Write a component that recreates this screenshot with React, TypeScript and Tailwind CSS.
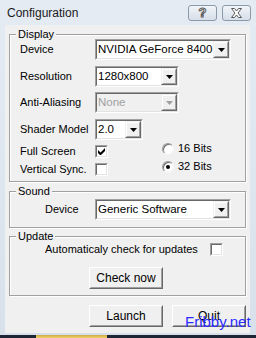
const font = "font-['Liberation_Sans',Arial,sans-serif]"

const Select = ({ value, w, disabled }: { value: string; w: string; disabled?: boolean }) => (
  <div className={`${w} h-[21px] flex border border-t-[#a0a0a0] border-l-[#a0a0a0] border-r-white border-b-white`}>
    <div
      className={`flex-1 min-w-0 flex border border-t-[#696969] border-l-[#696969] border-r-[#e3e3e3] border-b-[#e3e3e3] ${
        disabled ? 'bg-[#f0f0f0] text-[#a0a0a0]' : 'bg-white text-black'
      }`}
    >
      <span className="flex-1 min-w-0 overflow-hidden whitespace-nowrap pl-[1px] leading-[17px] text-[11.5px]">{value}</span>
      <div className="w-[16px] h-[17px] flex border border-t-[#f0f0f0] border-l-[#f0f0f0] border-r-[#696969] border-b-[#696969]">
        <div className="flex-1 flex items-center justify-center bg-[#f0f0f0] border border-t-white border-l-white border-r-[#a0a0a0] border-b-[#a0a0a0]">
          <svg width="7" height="4" viewBox="0 0 7 4">
            <path d="M0 0h7L3.5 4z" fill={disabled ? '#a0a0a0' : '#000'} />
          </svg>
        </div>
      </div>
    </div>
  </div>
)

const Checkbox = ({ checked }: { checked?: boolean }) => (
  <div className="w-[13px] h-[13px] flex border border-t-[#a0a0a0] border-l-[#a0a0a0] border-r-white border-b-white">
    <div className="flex-1 flex items-center justify-center bg-white border border-t-[#696969] border-l-[#696969] border-r-[#e3e3e3] border-b-[#e3e3e3]">
      {checked && (
        <svg width="7" height="7" viewBox="0 0 7 7">
          <path d="M0 2v3l2 2h1l4-4V0L2.5 4.5z" fill="#000" />
        </svg>
      )}
    </div>
  </div>
)

const Radio = ({ checked }: { checked?: boolean }) => (
  <div className="w-[12px] h-[12px] rounded-full flex items-center justify-center bg-white border border-t-[#9a9a9a] border-l-[#9a9a9a] border-r-[#f4f4f4] border-b-[#f4f4f4] shadow-[inset_1px_1px_0_#707070]">
    {checked && <div className="w-[4px] h-[4px] rounded-full bg-black" />}
  </div>
)

const Button = ({ label }: { label: string }) => (
  <div className="w-[74px] h-[22px] flex border border-t-white border-l-white border-r-[#696969] border-b-[#696969]">
    <div className="flex-1 flex items-center justify-center bg-[#f0f0f0] border border-t-[#f0f0f0] border-l-[#f0f0f0] border-r-[#a0a0a0] border-b-[#a0a0a0] text-[12px]">
      {label}
    </div>
  </div>
)

const Group = ({ title, className, children }: { title: string; className: string; children: React.ReactNode }) => (
  <div className={`relative mx-[4px] border border-[#a0a0a0] shadow-[inset_1px_1px_0_#fff,1px_1px_0_#fff] ${className}`}>
    <span className="absolute -top-[8px] left-[6px] px-[2px] bg-[#f0f0f0] leading-[14px]">{title}</span>
    {children}
  </div>
)

export default function App() {
  return (
    <div className={`w-[256px] h-[338px] flex flex-col bg-[#1e2635] text-[11px] text-black ${font} relative overflow-hidden`}>
      <div className="h-[335px] flex flex-col bg-gradient-to-b from-[#e4ebf3] to-[#d8e1eb]">
        {/* title bar */}
        <div className="h-[25px] flex items-center pl-[7px] pr-[5px]">
          <span className="flex-1 text-[12px] text-[#1a1a1a]">Configuration</span>
          <div className="flex gap-[5px]">
            <div className="w-[29px] h-[16px] rounded-[3px] border border-[#8c99a8] bg-gradient-to-b from-[#f2f5f9] to-[#d6dee8] flex items-center justify-center">
              <span className="text-[13px] font-bold leading-none text-white [-webkit-text-stroke:1px_#5a5a5a]">?</span>
            </div>
            <div className="w-[29px] h-[16px] rounded-[3px] border border-[#8c99a8] bg-gradient-to-b from-[#f2f5f9] to-[#d6dee8] flex items-center justify-center">
              <svg width="13" height="10" viewBox="0 0 13 10">
                <path
                  d="M1.5 0.5h3l2 2.5 2-2.5h3l-3.5 4.5 3.5 4.5h-3l-2-2.5-2 2.5h-3l3.5-4.5z"
                  fill="#fff"
                  stroke="#5a5a5a"
                  strokeWidth="1"
                />
              </svg>
            </div>
          </div>
        </div>

        {/* client area */}
        <div className="flex-1 ml-[5px] mr-[6px] mb-[2px] bg-[#f0f0f0] flex flex-col">
          <Group title="Display" className="mt-[9px] pl-[10px] pt-[4px] pb-[5px]">
            <div className="flex items-center h-[21px]">
              <span className="w-[75px]">Device</span>
              <Select value="NVIDIA GeForce 8400M GS" w="w-[136px]" />
            </div>
            <div className="flex items-center h-[21px] mt-[6px]">
              <span className="w-[75px]">Resolution</span>
              <Select value="1280x800" w="w-[84px]" />
            </div>
            <div className="flex items-center h-[21px] mt-[5px]">
              <span className="w-[75px]">Anti-Aliasing</span>
              <Select value="None" w="w-[84px]" disabled />
            </div>
            <div className="flex items-center h-[21px] mt-[6px]">
              <span className="w-[75px]">Shader Model</span>
              <Select value="2.0" w="w-[48px]" />
            </div>
            <div className="flex mt-[5px]">
              <div className="w-[142px] flex flex-col gap-[5px]">
                <div className="flex items-center h-[13px]">
                  <span className="w-[75px]">Full Screen</span>
                  <Checkbox checked />
                </div>
                <div className="flex items-center h-[13px]">
                  <span className="w-[75px]">Vertical Sync.</span>
                  <Checkbox />
                </div>
              </div>
              <div className="flex flex-col gap-[5px] -mt-[3px]">
                <div className="flex items-center h-[13px] gap-[4px]">
                  <Radio />
                  <span>16 Bits</span>
                </div>
                <div className="flex items-center h-[13px] gap-[4px]">
                  <Radio checked />
                  <span>32 Bits</span>
                </div>
              </div>
            </div>
          </Group>

          <Group title="Sound" className="mt-[9px] pl-[35px] pt-[7px] pb-[7px]">
            <div className="flex items-center h-[21px]">
              <span className="w-[50px]">Device</span>
              <Select value="Generic Software" w="w-[136px]" />
            </div>
          </Group>

          <Group title="Update" className="mt-[8px] pt-[6px] pb-[6px]">
            <div className="flex items-center h-[13px] pl-[35px]">
              <span className="w-[165px] whitespace-nowrap">Automaticaly check for updates</span>
              <Checkbox />
            </div>
            <div className="flex mt-[11px] pl-[79px]">
              <Button label="Check now" />
            </div>
          </Group>

          <div className="flex justify-end gap-[9px] pr-[4px] mt-[9px]">
            <Button label="Launch" />
            <Button label="Quit" />
          </div>
        </div>
      </div>

      {/* taskbar strip */}
      <div className="flex-1 flex">
        <div className="w-[36px]" />
        <div className="w-[71px] bg-gradient-to-b from-[#c9a94a] to-[#f4d36b]" />
      </div>

      <span className="absolute left-[185px] top-[314px] text-[15px] leading-none text-[#2b2bff]">Fribby.net</span>
    </div>
  )
}
